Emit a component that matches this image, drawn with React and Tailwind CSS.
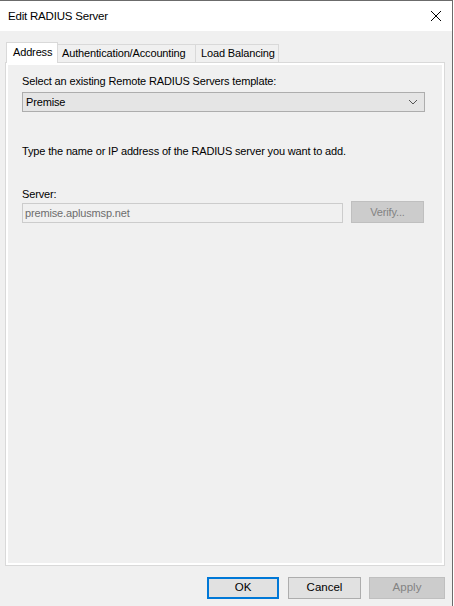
export default function App() {
  const font = { fontFamily: '"Liberation Sans", Arial, sans-serif' };
  return (
    <div className="w-[454px] h-[606px] flex bg-white text-black" style={font}>
      <div className="w-[453px] h-[606px] flex flex-col border-r border-t border-[#6b6b6b] bg-[#f0f0f0]">
        <div className="h-[30px] bg-white flex items-center justify-between pl-[8px] pr-[10px] shrink-0">
          <span className="text-[11.5px] leading-[14px] tracking-[-0.2px] text-black">Edit RADIUS Server</span>
          <svg width="12" height="12" viewBox="0 0 12 12">
            <path d="M1 1 L11 11 M11 1 L1 11" stroke="#000" strokeWidth="1" fill="none" />
          </svg>
        </div>
        <div className="flex-1 flex flex-col pt-[11px] pl-[5px] pr-[7px]">
          <div className="flex items-end h-[20px] relative z-10 pl-[1px] text-[11px] leading-[13px] tracking-[-0.15px]">
            <div className="h-[21px] w-[52px] bg-white border-l border-t border-r border-[#d9d9d9] mb-[-1px] flex items-start pt-[3px] pl-[6px]">
              Address
            </div>
            <div className="h-[18px] w-[138px] bg-[#f0f0f0] border-t border-r border-[#d9d9d9] flex items-center pl-[4px]">
              Authentication/Accounting
            </div>
            <div className="h-[18px] w-[83px] bg-[#f0f0f0] border-t border-r border-[#d9d9d9] flex items-center pl-[5px]">
              Load Balancing
            </div>
          </div>
          <div className="w-[440px] h-[504px] border border-[#d9d9d9] shrink-0">
            <div className="w-full h-full border-2 border-white bg-[#f0f0f0] pt-[10px] pl-[14px] pr-[17px] text-[11px] leading-[13px] tracking-[-0.15px]">
              <div>Select an existing Remote RADIUS Servers template:</div>
              <div className="mt-[4px] h-[20px] border border-[#adadad] bg-[#e5e5e5] flex items-center justify-between pl-[3px] pr-[6px]">
                <span>Premise</span>
                <svg width="10" height="6" viewBox="0 0 10 6">
                  <path d="M1 1 L5 5 L9 1" stroke="#555" strokeWidth="1" fill="none" />
                </svg>
              </div>
              <div className="mt-[33px]">Type the name or IP address of the RADIUS server you want to add.</div>
              <div className="mt-[30px]">Server:</div>
              <div className="mt-[0px] flex items-start gap-[8px]">
                <div className="mt-[2px] w-[321px] h-[20px] border border-[#cccccc] bg-[#f0f0f0] flex items-center pl-[2px] text-[#6d6d6d]">
                  premise.aplusmsp.net
                </div>
                <div className="w-[73px] h-[22px] border border-[#bfbfbf] bg-[#cccccc] text-[#838383] flex items-center justify-center">
                  Verify...
                </div>
              </div>
            </div>
          </div>
          <div className="mt-[11px] flex justify-end text-[11.5px]">
            <div className="w-[72px] h-[22px] border-2 border-[#0078d7] bg-[#e1e1e1] flex items-center justify-center">OK</div>
            <div className="ml-[9px] w-[73px] h-[22px] border border-[#adadad] bg-[#e1e1e1] flex items-center justify-center">Cancel</div>
            <div className="ml-[8px] w-[76px] h-[22px] border border-[#bfbfbf] bg-[#cccccc] text-[#838383] flex items-center justify-center">Apply</div>
          </div>
        </div>
      </div>
    </div>
  );
}
